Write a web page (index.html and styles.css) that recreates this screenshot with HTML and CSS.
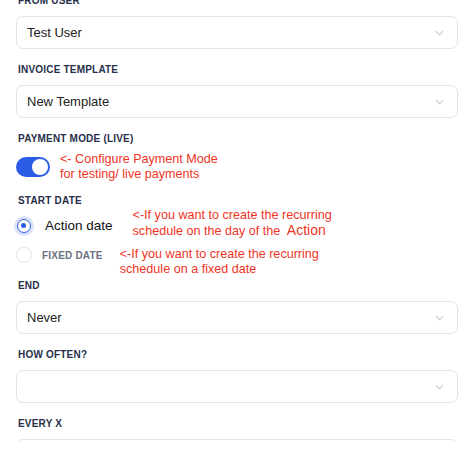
FILE: index.html
```html
<!DOCTYPE html>
<html lang="en">
<head>
  <meta charset="UTF-8" />
  <meta name="viewport" content="width=device-width, initial-scale=1.0" />
  <title>Recurring Invoice</title>
  <link rel="stylesheet" href="styles.css">
</head>
<body>

  <div class="page">
    <form class="form">

      <!-- From user -->
      <div class="field">
        <label class="label">FROM USER</label>
        <div class="select"><span>Test User</span><svg class="chev" viewBox="0 0 10 6"><path d="M1 1l4 4 4-4"/></svg></div>
      </div>

      <!-- Template -->
      <div class="field">
        <label class="label">INVOICE TEMPLATE</label>
        <div class="select"><span>New Template</span><svg class="chev" viewBox="0 0 10 6"><path d="M1 1l4 4 4-4"/></svg></div>
      </div>

      <!-- Payment mode -->
      <div class="field pay">
        <label class="label">PAYMENT MODE (LIVE)</label>
        <div class="toggle-row">
          <div class="toggle"><div class="knob"></div></div>
          <p class="note">&lt;- Configure Payment Mode<br>for testing/ live payments</p>
        </div>
      </div>

      <!-- Start date -->
      <div class="field start">
        <label class="label">START DATE</label>
        <div class="radio-row first">
          <div class="radio-opt">
            <span class="radio checked"></span>
            <span class="opt-text">Action date</span>
          </div>
          <p class="note">&lt;-If you want to create the recurring<br>schedule on the day of the <span class="big">Action</span></p>
        </div>
        <div class="radio-row second">
          <div class="radio-opt">
            <span class="radio"></span>
            <span class="opt-caps">FIXED DATE</span>
          </div>
          <p class="note">&lt;-If you want to create the recurring<br>schedule on a fixed date</p>
        </div>
      </div>

      <!-- End -->
      <div class="field">
        <label class="label">END</label>
        <div class="select"><span>Never</span><svg class="chev" viewBox="0 0 10 6"><path d="M1 1l4 4 4-4"/></svg></div>
      </div>

      <div class="field">
        <label class="label">HOW OFTEN?</label>
        <div class="select"><span></span><svg class="chev" viewBox="0 0 10 6"><path d="M1 1l4 4 4-4"/></svg></div>
      </div>

      <div class="field">
        <label class="label">EVERY X</label>
        <div class="select"><span></span></div>
      </div>

    </form>
  </div>

</body>
</html>
```

FILE: styles.css
```css
* { margin: 0; padding: 0; box-sizing: border-box; }
body { font-family: 'Liberation Sans', Arial, sans-serif; background: #fff; color: #1f2430; }

.page { height: 441px; overflow: hidden; }
.form { padding: 0 4px 0 16px; margin-top: -6px; display: flex; flex-direction: column; gap: 14px; }

.field { display: flex; flex-direction: column; }
.field.pay { margin-bottom: -2px; }
.field.start { margin-bottom: -12px; }
.label { display: block; font-size: 10px; font-weight: bold; line-height: 14px; letter-spacing: 0.2px; color: #27304a; margin: 0 0 8px 2px; }

.select { height: 33px; border: 1px solid #e1e3ea; border-radius: 7px; display: flex; align-items: center; justify-content: space-between; padding: 0 13px 0 10px; font-size: 13px; color: #222; }
.chev { width: 9px; height: 6px; fill: none; stroke: #c3c6cf; stroke-width: 1.2; }

.toggle-row { display: flex; align-items: flex-start; gap: 10px; margin-top: -2px; }
.toggle { width: 34px; height: 20px; border-radius: 10px; background: #2b5ce6; position: relative; margin-top: 5px; flex-shrink: 0; }
.knob { position: absolute; right: 2px; top: 2px; width: 16px; height: 16px; border-radius: 50%; background: #fff; }

.note { color: #f0351f; font-size: 12.6px; line-height: 15px; }
.note .big { font-size: 14px; margin-left: 3px; }

.radio-row { display: flex; align-items: flex-start; }
.radio-row.first { gap: 20px; margin-top: -8px; }
.radio-row.second { gap: 17px; margin-top: 8px; }
.radio-opt { display: flex; align-items: center; gap: 12px; }
.radio-row.first .radio-opt { margin-top: 9px; }
.radio-row.second .radio-opt { gap: 10px; }

.radio { width: 16px; height: 16px; border-radius: 50%; border: 1px solid #dfe1e7; background: #fff; display: inline-block; flex-shrink: 0; }
.radio.checked { width: 14px; height: 14px; border: 1.5px solid #2b5ce6; box-shadow: 0 0 0 3px #dbe3fa; position: relative; margin-left: 1px; margin-right: 2px; }
.radio.checked::after { content: ""; position: absolute; left: 3px; top: 3px; width: 5px; height: 5px; border-radius: 50%; background: #2b5ce6; }

.opt-text { font-size: 13.5px; color: #111; line-height: 17px; }
.opt-caps { font-size: 10px; font-weight: bold; letter-spacing: 0.2px; color: #6b7280; line-height: 15px; }
```
